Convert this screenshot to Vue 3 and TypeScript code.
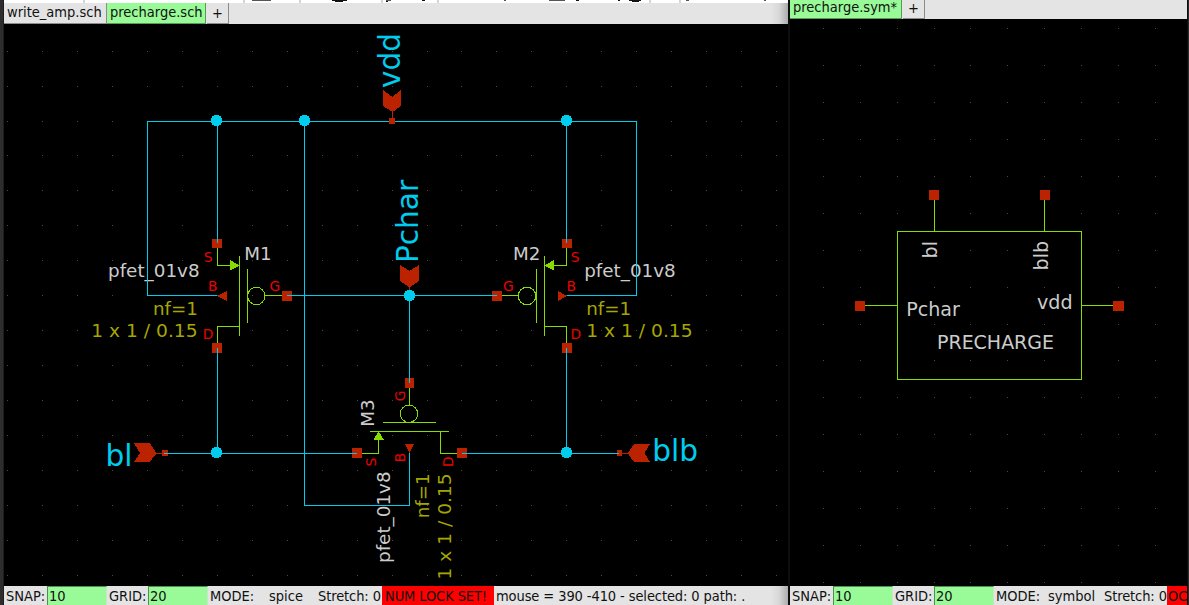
<script setup lang="ts">
type Kind = 'big' | 'name' | 'prop' | 'pin' | 'sym'

interface Label {
  t: string
  x: number
  y: number
  k: Kind
  up?: boolean
  len?: number
}

interface Dot {
  x: number
  y: number
}

function grid(x0: number, dx: number, nx: number, y0: number, dy: number, ny: number): Dot[] {
  const dots: Dot[] = []
  for (let j = 0; j < ny; j++) {
    for (let i = 0; i < nx; i++) {
      dots.push({ x: Math.floor(x0 + dx * i), y: Math.floor(y0 + dy * j) })
    }
  }
  return dots
}

const schematicGrid = grid(7.48, 34.96, 23, 51.2, 34.93, 16)
const symbolGrid = grid(823.4, 36.89, 10, 28.8, 36.9, 16)

const labels: Label[] = [
  { t: 'vdd', x: 400, y: 88, k: 'big', up: true },
  { t: 'Pchar', x: 418, y: 263, k: 'big', up: true },
  { t: 'bl', x: 105.4, y: 465.6, k: 'big' },
  { t: 'blb', x: 652.2, y: 461, k: 'big' },
  { t: 'M1', x: 244.3, y: 260, k: 'name' },
  { t: 'M2', x: 513, y: 260, k: 'name' },
  { t: 'M3', x: 374, y: 426.8, k: 'name', up: true },
  { t: 'pfet_01v8', x: 108, y: 277.3, k: 'name', len: 91.6 },
  { t: 'pfet_01v8', x: 584.2, y: 277.3, k: 'name', len: 91.6 },
  { t: 'pfet_01v8', x: 390.3, y: 563, k: 'name', up: true, len: 91.6 },
  { t: 'nf=1', x: 153, y: 315, k: 'prop' },
  { t: 'nf=1', x: 586.2, y: 315, k: 'prop' },
  { t: 'nf=1', x: 429.3, y: 518.3, k: 'prop', up: true },
  { t: '1 x 1 / 0.15', x: 91.2, y: 337, k: 'prop', len: 106.4 },
  { t: '1 x 1 / 0.15', x: 586.2, y: 337, k: 'prop', len: 106.4 },
  { t: '1 x 1 / 0.15', x: 451, y: 579.4, k: 'prop', up: true, len: 106 },
  { t: 'S', x: 203.8, y: 262, k: 'pin' },
  { t: 'B', x: 208, y: 291.2, k: 'pin' },
  { t: 'D', x: 202.8, y: 339.2, k: 'pin' },
  { t: 'G', x: 269.5, y: 291.2, k: 'pin' },
  { t: 'S', x: 570.8, y: 262, k: 'pin' },
  { t: 'B', x: 566.6, y: 291.2, k: 'pin' },
  { t: 'D', x: 570.6, y: 339.2, k: 'pin' },
  { t: 'G', x: 502.9, y: 291.2, k: 'pin' },
  { t: 'G', x: 405, y: 401.2, k: 'pin', up: true },
  { t: 'S', x: 375.8, y: 466.5, k: 'pin', up: true },
  { t: 'B', x: 405, y: 462.3, k: 'pin', up: true },
  { t: 'D', x: 453.3, y: 467, k: 'pin', up: true },
]

const symbolLabels: Label[] = [
  { t: 'bl', x: 937, y: 258.4, k: 'sym', up: true },
  { t: 'blb', x: 1048, y: 270.4, k: 'sym', up: true },
  { t: 'Pchar', x: 906.2, y: 316, k: 'sym' },
  { t: 'vdd', x: 1037, y: 309, k: 'sym' },
  { t: 'PRECHARGE', x: 937, y: 349, k: 'sym', len: 117 },
]

const junctions: [number, number][] = [
  [216.5, 120.5], [304.5, 120.5], [566.5, 120.5],
  [409.4, 295.5], [216.5, 452.5], [566.5, 452.5],
]

// x, y, width, height of each pin square
const pins: [number, number, number, number][] = [
  [212, 239, 10, 9], [212, 343, 10, 10], [282, 291, 10, 10],
  [562, 239, 10, 9], [562, 343, 10, 10], [492, 291, 10, 10],
  [352, 448, 10, 10], [405, 378, 9, 10], [457, 448, 10, 10],
  [162, 450, 6, 6], [617, 450, 5, 6],
]

const symbolPins: [number, number, number, number][] = [
  [929, 190, 10, 10], [1040, 190, 10, 10], [855, 301, 10, 10], [1113, 301, 11, 10],
]

const spin = (l: Label): string | undefined => (l.up ? `rotate(-90 ${l.x} ${l.y})` : undefined)
</script>

<template>
  <div class="desktop">
    <section class="pane schematic">
      <svg class="toolbar" width="784" height="3" viewBox="4 0 784 3">
        <path class="sep" d="M83 0h2v3h-2zM243 0h2v3h-2zM299 0h2v3h-2zM381 0h2v3h-2zM437 0h2v3h-2zM649 0h2v3h-2zM679 0h2v3h-2z" />
        <path class="soft" d="M252 0h19v1h-19zM386 0h5v1h-5zM549 0h16v1h-16zM504 0h2v1h-2zM686 0h3v1h-3zM764 0h2v1h-2z" />
        <path class="ink" d="M332 0h15v1h-4v1h-8v-1h-3zM386 1h2v1h-2zM422 0h3v1h-3zM576 0h3v1h-3zM618 0h2v1h-2zM629 0h12v1h-2v1h-7v-1h-3z" />
      </svg>
      <nav class="tabs">
        <span class="tab w1">write_amp.sch</span>
        <span class="tab on w2">precharge.sch</span>
        <span class="tab plus">+</span>
      </nav>
      <svg class="canvas" width="784" height="562" viewBox="4 24 784 562">
        <rect v-for="(d, i) in schematicGrid" :key="i" class="dot" :x="d.x" :y="d.y" width="1" height="1" />
        <text
          v-for="(l, i) in labels"
          :key="'t' + i"
          :class="l.k"
          :x="l.x"
          :y="l.y"
          :transform="spin(l)"
          :textLength="l.len"
          lengthAdjust="spacingAndGlyphs"
        >{{ l.t }}</text>
        <g class="device">
          <path d="M217.5 248V265.5H239M239.5 256V336M247.5 269V323M217.5 343V326.5H239M265 295.5H282" />
          <path d="M566.5 248V265.5H545M544.5 256V336M536.5 269V323M566.5 343V326.5H545M502 295.5H518" />
          <path d="M362 453.5H378.5V432M370 431.5H449M383 422.5H436M440.5 432V453.5H457M409.5 388V405" />
          <circle cx="256.3" cy="296" r="8.7" />
          <circle cx="527" cy="296" r="8.7" />
          <circle cx="409" cy="413.8" r="8.7" />
          <path class="fill" d="M230 260V270.5L239.5 265.5ZM554 260V270.5L544.5 265.5ZM373.5 440H384L378.5 431Z" />
        </g>
        <g class="red">
          <rect v-for="(p, i) in pins" :key="'p' + i" :x="p[0]" :y="p[1]" :width="p[2]" :height="p[3]" />
          <path d="M217.5 296L227 291V301ZM566.7 296L558 291V301ZM409.5 453L405 444H414Z" />
          <path d="M383 90L392.3 97L401 90V106L392.5 112L383 106Z" />
          <path d="M400 265L409.5 271L419 265V281L409.5 287.5L400 281Z" />
          <path d="M134 443.3H149.8L156.7 453.3L149.5 462H134L140 453Z" />
          <path d="M650 444H634L627.7 453.3L634 462H650L644.5 453Z" />
          <path d="M392 112h1v6h-1zM409 287h1v4h-1zM156 453h6v1h-6zM622 453h6v1h-6z" />
        </g>
        <g class="wire">
          <path d="M217 295.5H147.5V121.5H636.5V295.5H567" />
          <path d="M217.5 121V243M217.5 348V453M566.5 121V243M566.5 348V453" />
          <path d="M287 295.5H497M409.5 295V383M304.5 121V505.5H409.5V453" />
          <path d="M164 453.5H357M462 453.5H619" />
          <circle v-for="(j, i) in junctions" :key="'j' + i" :cx="j[0]" :cy="j[1]" r="5.8" />
        </g>
        <rect class="port" x="389" y="118" width="6" height="6" />
      </svg>
      <footer class="status">
        <span class="s-snap">SNAP:</span><span class="entry">10</span>
        <span class="s-grid">GRID:</span><span class="entry">20</span>
        <span class="s-mode">MODE:</span><span class="s-kind">spice</span>
        <span class="s-stretch">Stretch: 0</span>
        <span class="warn">NUM LOCK SET!</span>
        <span class="s-mouse">mouse = 390 -410 - selected: 0 path: .</span>
      </footer>
    </section>
    <section class="pane symbol">
      <nav class="tabs">
        <span class="tab on w3">precharge.sym*</span>
        <span class="tab plus">+</span>
      </nav>
      <svg class="canvas" width="397" height="567" viewBox="790 19 397 567">
        <rect v-for="(d, i) in symbolGrid" :key="i" class="dot" :x="d.x" :y="d.y" width="1" height="1" />
        <g class="device">
          <rect x="897.5" y="231.5" width="184" height="148" />
          <path d="M934.5 200V231M1044.5 200V231M865 305.5H897M1082 305.5H1113" />
        </g>
        <g class="red">
          <rect v-for="(p, i) in symbolPins" :key="'p' + i" :x="p[0]" :y="p[1]" :width="p[2]" :height="p[3]" />
        </g>
        <text
          v-for="(l, i) in symbolLabels"
          :key="'t' + i"
          :class="l.k"
          :x="l.x"
          :y="l.y"
          :transform="spin(l)"
          :textLength="l.len"
          lengthAdjust="spacingAndGlyphs"
        >{{ l.t }}</text>
      </svg>
      <footer class="status">
        <span class="s-snap">SNAP:</span><span class="entry">10</span>
        <span class="s-grid">GRID:</span><span class="entry">20</span>
        <span class="s-mode2">MODE:</span><span class="s-kind2">symbol</span>
        <span class="s-stretch2">Stretch: 0</span>
        <span class="warn cut">OC</span>
      </footer>
    </section>
  </div>
</template>

<style>
body {
  background: #000;
  overflow: hidden;
}
</style>

<style scoped>
.desktop {
  display: flex;
  box-sizing: border-box;
  width: 1189px;
  height: 605px;
  padding-left: 4px;
  border-right: 1px solid #2a2a2a;
  background: linear-gradient(90deg, #2d2d2d 0 3px, #1c1c1c 3px 4px, #0d0d0d 4px);
  font-family: "DejaVu Sans Condensed", "DejaVu Sans", sans-serif;
  font-stretch: condensed;
  font-size: 14.5px;
  color: #111;
}
.pane {
  display: flex;
  flex-direction: column;
  height: 605px;
  overflow: hidden;
}
.schematic { width: 784px; margin-right: 2px; }
.symbol { width: 397px; }
.toolbar { display: block; flex: none; background: #fff; }
.sep { fill: #d5d5d5; }
.soft { fill: #555; }
.ink { fill: #111; }
.tabs {
  display: flex;
  flex: none;
  height: 21px;
  background: #e4e4e4;
}
.schematic .tabs,
.schematic .status {
  background: linear-gradient(90deg, #e4e4e4 767px, #d8d8d8 775px, #adadad 784px);
}
.symbol .tabs { height: 19px; }
.tab {
  box-sizing: border-box;
  height: 21px;
  padding-left: 3px;
  border-right: 1px solid #8c8c8c;
  border-bottom: 1px solid #8c8c8c;
  background: #e4e4e4;
  line-height: 18px;
  white-space: pre;
}
.symbol .tab { height: 19px; line-height: 15px; }
.on {
  background: #98fb98;
  border-color: #5c9a5c;
}
.w1 { width: 103px; }
.w2 { width: 99px; }
.w3 { width: 112px; }
.tab.plus {
  width: 22px;
  margin-left: 1px;
  padding: 1px 0 0;
  text-align: center;
}
.canvas { display: block; flex: none; background: #000; }
.canvas text { font-family: "DejaVu Sans", sans-serif; font-stretch: normal; }
.dot { fill: #4a4a4a; }
.big { font-size: 29.6px; fill: #00ccee; }
.name { font-size: 18.3px; fill: #cccccc; }
.prop { font-size: 18.3px; fill: #a6a600; }
.pin { font-size: 13.8px; fill: #ee0000; }
.sym { font-size: 19.1px; fill: #cccccc; }
.device path, .device circle, .device rect { fill: none; stroke: #88dd00; shape-rendering: crispEdges; }
.device .fill { fill: #88dd00; stroke: none; }
.red { fill: #bb2200; shape-rendering: crispEdges; }
.wire path { fill: none; stroke: #00ccee; shape-rendering: crispEdges; }
.wire circle { fill: #00ccee; shape-rendering: crispEdges; }
.port { fill: #bb2200; }
.status {
  display: flex;
  flex: none;
  height: 19px;
  background: #e4e4e4;
  line-height: 21px;
  white-space: pre;
}
.status span { flex: none; box-sizing: border-box; height: 19px; padding-left: 2px; }
.s-snap { width: 43px; }
.s-grid { width: 41px; }
.s-mode { width: 59px; }
.s-kind { width: 49px; }
.status .s-stretch { width: 66px; }
.s-mouse { width: 280px; letter-spacing: -0.1px; }
.s-mode2 { width: 52px; }
.s-kind2 { width: 56px; }
.s-stretch2 { width: 65px; letter-spacing: -0.1px; }
.schematic .s-stretch { letter-spacing: -0.1px; }
.status .entry {
  width: 60px;
  background: #98fb98;
  border-top: 1px solid #4f8f4f;
  border-left: 1px solid #4f8f4f;
  border-right: 1px solid #c4e8c4;
  padding-left: 1px;
  line-height: 19px;
}
.status .warn { width: 112px; padding-left: 3px; background: #f00; letter-spacing: -0.1px; }
.status .cut { width: 20px; padding-left: 1px; overflow: hidden; }
</style>
